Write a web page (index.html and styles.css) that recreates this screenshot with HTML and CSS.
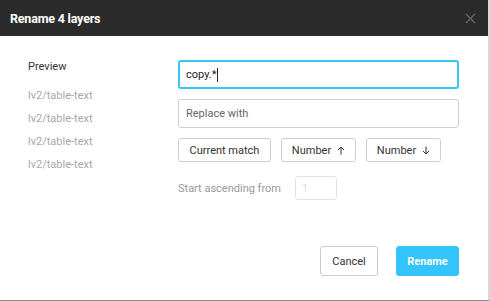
FILE: index.html
```html
<!DOCTYPE html>
<html lang="en">
<head>
  <meta charset="UTF-8">
  <title>Rename 4 layers</title>
  <link rel="stylesheet" href="styles.css">
</head>
<body>

  <div class="dialog">
    <header class="dialog-header">
      <span class="dialog-title">Rename 4 layers</span>
      <span class="close-btn">
        <svg width="11" height="11" viewBox="0 0 11 11"><path d="M1 1L10 10M10 1L1 10" stroke="#6a6a6a" stroke-width="1.2" fill="none"/></svg>
      </span>
    </header>

    <div class="dialog-body">
      <div class="preview">
        <div class="preview-title">Preview</div>
        <div class="preview-item">lv2/table-text</div>
        <div class="preview-item">lv2/table-text</div>
        <div class="preview-item">lv2/table-text</div>
        <div class="preview-item">lv2/table-text</div>
      </div>

      <div class="form">
        <div class="field active">copy.*<span class="caret"></span></div>
        <div class="field placeholder">Replace with</div>
        <div class="token-row">
          <button class="btn token-current">Current match</button>
          <button class="btn token-num">Number
            <svg class="arrow" width="8" height="9" viewBox="0 0 8 9"><path d="M4 8.5V1M1 4L4 1L7 4" stroke="#333" stroke-width="1" fill="none"/></svg>
          </button>
          <button class="btn token-num">Number
            <svg class="arrow" width="8" height="9" viewBox="0 0 8 9"><path d="M4 0.5V8M1 5L4 8L7 5" stroke="#333" stroke-width="1" fill="none"/></svg>
          </button>
        </div>
        <div class="start-row">
          <span class="start-label">Start ascending from</span>
          <span class="start-input">1</span>
        </div>
      </div>
    </div>

    <footer class="dialog-footer">
      <button class="btn cancel-btn">Cancel</button>
      <button class="btn rename-btn">Rename</button>
    </footer>
  </div>

</body>
</html>
```

FILE: styles.css
```css
body {
  margin: 0;
  padding: 0;
  font-family: Roboto, "Liberation Sans", sans-serif;
  font-size: 11px;
  color: #333;
  background-color: #fff;
}
.dialog {
  width: 488px;
  height: 300px;
  border-right: 2px solid #d8d8d8;
  border-bottom: 1px solid #8a8a8a;
  display: flex;
  flex-direction: column;
  background-color: #fff;
}
.dialog-header {
  height: 36px;
  background-color: #2b2b2b;
  display: flex;
  align-items: center;
  justify-content: space-between;
  padding: 0 12px 0 10px;
}
.dialog-title {
  color: #fff;
  font-weight: bold;
  font-size: 12.5px;
  letter-spacing: -0.2px;
}
.close-btn {
  display: flex;
  margin-top: 1px;
}
.dialog-body {
  display: flex;
  padding-top: 24px;
  flex: 1;
}
.preview {
  width: 150px;
  padding-left: 28px;
}
.preview-title {
  line-height: 14px;
  margin-bottom: 15px;
  color: #333;
}
.preview-item {
  color: #a8a8a8;
  line-height: 14px;
  margin-bottom: 9px;
}
.form {
  width: 281px;
}
.field {
  height: 29px;
  box-sizing: border-box;
  border: 1px solid #d0d0d0;
  border-radius: 3px;
  padding: 0 7px;
  display: flex;
  align-items: center;
  margin-bottom: 10px;
}
.field.active {
  border: 2px solid #38c6f7;
  padding: 0 6px;
  color: #222;
}
.field.placeholder {
  color: #666;
}
.caret {
  display: inline-block;
  width: 1px;
  height: 14px;
  background-color: #222;
  margin-left: 1px;
}
.btn {
  font-family: inherit;
  font-size: 11px;
  background-color: #fff;
  border: 1px solid #cfcfcf;
  border-radius: 3px;
  color: #333;
  padding: 0;
  cursor: pointer;
}
.token-row {
  display: flex;
  gap: 10px;
  margin-bottom: 14px;
}
.token-row .btn {
  height: 24px;
  display: flex;
  align-items: center;
  justify-content: center;
}
.token-current {
  width: 93px;
}
.token-num {
  width: 75px;
}
.arrow {
  margin-left: 6px;
}
.start-row {
  display: flex;
  align-items: center;
}
.start-label {
  color: #999;
  width: 117px;
}
.start-input {
  width: 42px;
  height: 24px;
  box-sizing: border-box;
  border: 1px solid #e2e2e2;
  border-radius: 3px;
  color: #ddd;
  padding-left: 6px;
  display: flex;
  align-items: center;
}
.dialog-footer {
  display: flex;
  justify-content: flex-end;
  gap: 18px;
  padding: 0 29px 24px 0;
}
.dialog-footer .btn {
  height: 30px;
}
.cancel-btn {
  width: 58px;
  border-color: #ccc;
}
.rename-btn {
  width: 63px;
  background-color: #33c4fb;
  border-color: #33c4fb;
  color: #fff;
  font-weight: bold;
}
```
